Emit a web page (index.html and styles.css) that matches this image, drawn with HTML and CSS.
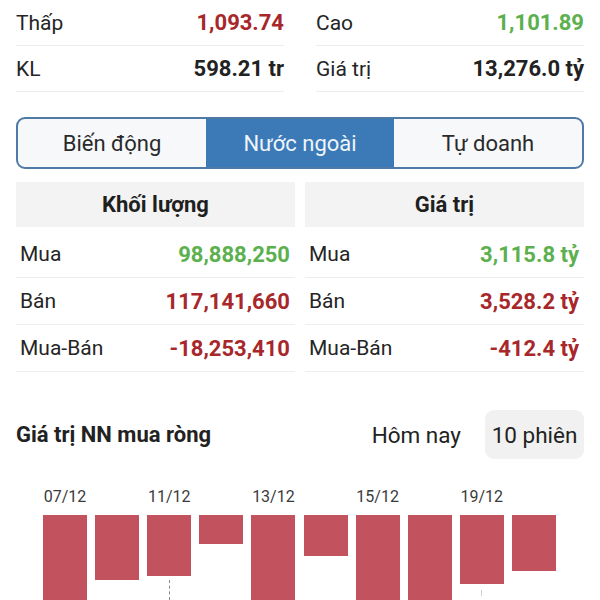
FILE: index.html
```html
<!DOCTYPE html>
<html lang="vi">
<head>
<meta charset="utf-8">
<title>Nước ngoài</title>
<link rel="stylesheet" href="styles.css">
</head>
<body>
<div class="page">
  <div class="summary">
    <div class="srow"><span class="lbl">Thấp</span><span class="val red">1,093.74</span></div>
    <div class="srow"><span class="lbl">Cao</span><span class="val green">1,101.89</span></div>
    <div class="srow"><span class="lbl">KL</span><span class="val">598.21 tr</span></div>
    <div class="srow"><span class="lbl">Giá trị</span><span class="val">13,276.0 tỷ</span></div>
  </div>

  <div class="tabs">
    <div class="tab">Biến động</div>
    <div class="tab active">Nước ngoài</div>
    <div class="tab">Tự doanh</div>
  </div>

  <div class="tables">
    <div class="tbl">
      <div class="thead">Khối lượng</div>
      <div class="trow"><span class="lbl">Mua</span><span class="val green">98,888,250</span></div>
      <div class="trow"><span class="lbl">Bán</span><span class="val red">117,141,660</span></div>
      <div class="trow"><span class="lbl">Mua-Bán</span><span class="val red">-18,253,410</span></div>
    </div>
    <div class="tbl">
      <div class="thead">Giá trị</div>
      <div class="trow"><span class="lbl">Mua</span><span class="val green">3,115.8 tỷ</span></div>
      <div class="trow"><span class="lbl">Bán</span><span class="val red">3,528.2 tỷ</span></div>
      <div class="trow"><span class="lbl">Mua-Bán</span><span class="val red">-412.4 tỷ</span></div>
    </div>
  </div>

  <div class="chart-head">
    <div class="chart-title">Giá trị NN mua ròng</div>
    <div class="periods">
      <span class="period">Hôm nay</span>
      <span class="period selected">10 phiên</span>
    </div>
  </div>

  <div class="chart">
    <div class="col"><div class="date">07/12</div><div class="bar" style="height:120px"></div></div>
    <div class="col"><div class="date"></div><div class="bar" style="height:65px"></div></div>
    <div class="col"><div class="date">11/12</div><div class="bar" style="height:61px"></div><div class="marker"></div></div>
    <div class="col"><div class="date"></div><div class="bar" style="height:29px"></div></div>
    <div class="col"><div class="date">13/12</div><div class="bar" style="height:120px"></div></div>
    <div class="col"><div class="date"></div><div class="bar" style="height:41px"></div></div>
    <div class="col"><div class="date">15/12</div><div class="bar" style="height:120px"></div></div>
    <div class="col"><div class="date"></div><div class="bar" style="height:120px"></div></div>
    <div class="col"><div class="date">19/12</div><div class="bar" style="height:69px"></div><div class="marker faint"></div></div>
    <div class="col"><div class="date"></div><div class="bar" style="height:56px"></div></div>
  </div>
</div>
</body>
</html>
```

FILE: styles.css
```css
* { box-sizing: border-box; }

html, body {
  margin: 0;
  padding: 0;
  background: #ffffff;
}

body {
  font-family: Roboto, "Noto Sans", "Liberation Sans", sans-serif;
  color: #222222;
}

.page {
  width: 600px;
  height: 600px;
  overflow: hidden;
  padding: 0 16px;
}

.summary {
  display: grid;
  grid-template-columns: 1fr 1fr;
  column-gap: 32px;
}

.srow {
  height: 46px;
  display: flex;
  align-items: center;
  justify-content: space-between;
  border-bottom: 1px solid #ececec;
  font-size: 21px;
}

.lbl {
  font-size: 21px;
  font-weight: 400;
  color: #252525;
}

.val {
  font-size: 22px;
  font-weight: 700;
  color: #222222;
}

.red { color: #a7272b; }
.green { color: #5cb04e; }

.tabs {
  margin-top: 25px;
  height: 52px;
  display: grid;
  grid-template-columns: 1fr 1fr 1fr;
  border: 2px solid #4f7aa6;
  border-radius: 9px;
  overflow: hidden;
  background: #f6f8fa;
}

.tab {
  display: flex;
  align-items: center;
  justify-content: center;
  font-size: 22px;
  color: #2a2a2a;
}

.tab.active {
  background: #3b7ab7;
  color: #eef4fa;
}

.tables {
  margin-top: 13px;
  display: grid;
  grid-template-columns: 1fr 1fr;
  column-gap: 10px;
}

.thead {
  height: 45px;
  margin-bottom: 4px;
  background: #f3f3f3;
  display: flex;
  align-items: center;
  justify-content: center;
  font-size: 22px;
  font-weight: 700;
  color: #1f1f1f;
}

.trow {
  height: 47px;
  display: flex;
  align-items: center;
  justify-content: space-between;
  padding: 0 5px 0 4px;
  border-bottom: 1px solid #ededed;
}

.chart-head {
  margin-top: 38px;
  height: 49px;
  display: flex;
  align-items: center;
  justify-content: space-between;
}

.chart-title {
  font-size: 22px;
  font-weight: 700;
  color: #222222;
}

.periods {
  display: flex;
  align-items: center;
  gap: 16px;
}

.period {
  height: 49px;
  display: flex;
  align-items: center;
  padding: 0 8px;
  font-size: 22.5px;
  color: #222222;
  white-space: nowrap;
}

.period.selected {
  width: 99px;
  padding: 0;
  justify-content: center;
  background: #f1f1f1;
  border-radius: 9px;
}

.chart {
  margin-top: 28px;
  height: 113px;
  overflow: hidden;
  display: flex;
  padding-left: 23px;
}

.col {
  width: 52.1px;
  display: flex;
  flex-direction: column;
  align-items: center;
}

.date {
  flex-shrink: 0;
  height: 20px;
  line-height: 20px;
  margin-bottom: 8px;
  font-size: 16px;
  color: #3b3b3b;
}

.bar {
  width: 44px;
  background: #c2525d;
  flex-shrink: 0;
}

.marker {
  flex-shrink: 0;
  margin-top: 4px;
  height: 20px;
  border-left: 1px dashed #8a8a8a;
}

.marker.faint {
  margin-top: 6px;
  height: 6px;
  border-left-color: #cfcfcf;
}
```
